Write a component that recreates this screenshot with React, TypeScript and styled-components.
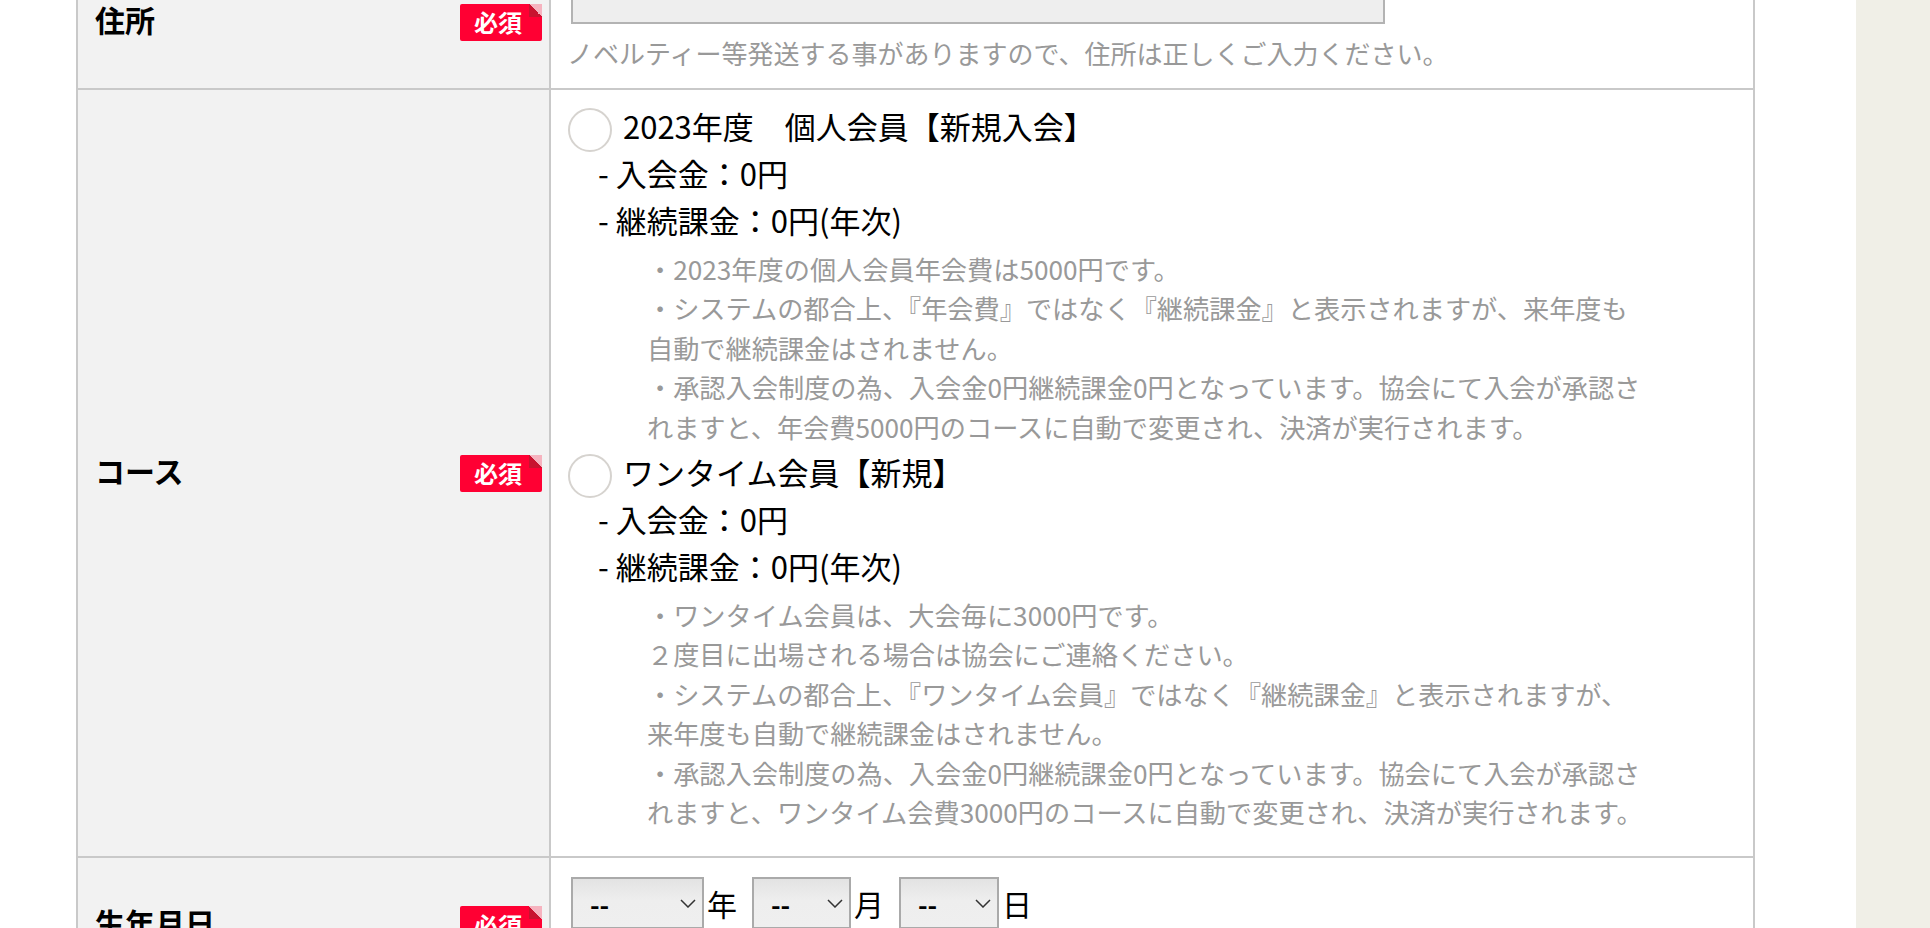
import React from 'react';
import styled, { createGlobalStyle } from 'styled-components';

const GlobalStyle = createGlobalStyle`
  html, body {
    margin: 0;
    padding: 0;
    background: #fff;
  }
  body {
    font-family: "Noto Sans CJK JP", "Noto Sans", sans-serif;
    color: #000;
    overflow: hidden;
  }
  * {
    box-sizing: border-box;
  }
`;

const Page = styled.div`
  display: flex;
  min-height: 928px;
`;

const Main = styled.main`
  flex: 1;
  background: #fff;
  padding: 0 101px 0 76px;
`;

const Side = styled.aside`
  width: 74px;
  flex: none;
  background: #f0efe7;
`;

const FormTable = styled.div`
  margin-top: -46px;
  border: 2px solid #c9c9c9;
  border-bottom: none;
`;

const Row = styled.div<{ $minHeight?: number }>`
  display: grid;
  grid-template-columns: 473px 1fr;
  border-bottom: 2px solid #c9c9c9;
  min-height: ${p => (p.$minHeight ? `${p.$minHeight}px` : 'auto')};
`;

const LabelCell = styled.div`
  display: flex;
  align-items: center;
  justify-content: space-between;
  padding: 0 7px 0 17px;
  background: #f2f2f2;
  border-right: 2px solid #c9c9c9;
`;

const LabelText = styled.span`
  margin-bottom: 6px;
  font-size: 30px;
  font-weight: 700;
  color: #000;
`;

const Badge = styled.span`
  position: relative;
  display: flex;
  align-items: center;
  justify-content: center;
  width: 82px;
  height: 37px;
  padding-right: 6px;
  background: #ff0033;
  border-radius: 2px;
  color: #fff;
  font-size: 24px;
  font-weight: 700;
  line-height: 1;

  &::after {
    content: '';
    position: absolute;
    top: 0;
    right: 0;
    width: 13px;
    height: 13px;
    background: linear-gradient(45deg, #c8132f 50%, #f6b3bf 50%);
  }
`;

const ContentCell = styled.div<{ $pt?: number; $pb?: number }>`
  padding: ${p => p.$pt ?? 16}px 16px ${p => p.$pb ?? 16}px;
  background: #fff;
`;

const TextInput = styled.input`
  display: block;
  width: 814px;
  height: 52px;
  margin-left: 4px;
  padding: 0 12px;
  border: 2px solid #b3b3b3;
  border-radius: 0;
  background: #eee;
  font-family: inherit;
  font-size: 30px;
`;

const InputNote = styled.p`
  margin: 9px 0 0;
  font-size: 26px;
  line-height: 39px;
  color: #999;
`;

const Course = styled.div`
  & + & {
    margin-top: 1px;
  }
`;

const CourseTitle = styled.label`
  display: flex;
  align-items: center;
  gap: 11px;
  font-size: 31px;
  line-height: 47px;
  color: #000;
`;

const Radio = styled.input.attrs({ type: 'radio' })`
  appearance: none;
  flex: none;
  width: 44px;
  height: 44px;
  margin: 4px 0 -4px 1px;
  border: 2px solid #d6d3cf;
  border-radius: 50%;
  background: #fff;
`;

const FeeLine = styled.div`
  padding-left: 31px;
  font-size: 31px;
  line-height: 47px;
  color: #000;
`;

const CourseNote = styled.p`
  margin: 7px 0 0;
  padding-left: 80px;
  font-size: 26.2px;
  line-height: 39.4px;
  color: #999;
  white-space: nowrap;
`;

const DateRow = styled.div`
  display: flex;
  align-items: center;
  margin-left: 4px;
`;

const SelectWrap = styled.span<{ $width: number }>`
  position: relative;
  display: inline-block;
  width: ${p => p.$width}px;
  height: 52px;
`;

const DateSelect = styled.select`
  appearance: none;
  width: 100%;
  height: 100%;
  padding: 0 0 0 17px;
  border: 2px solid #aaa;
  border-radius: 0;
  background: linear-gradient(#e3e3e3, #eeeeee 45%, #efefef);
  font-family: inherit;
  font-size: 26px;
  font-weight: 700;
  color: #000;
`;

const Chevron = styled.svg`
  position: absolute;
  right: 8px;
  top: 22px;
  pointer-events: none;
`;

const DateUnit = styled.span`
  margin: 0 15px 0 3px;
  font-size: 30px;
  line-height: 1;
  color: #000;
`;

type CourseData = {
  title: string;
  entryFee: string;
  recurring: string;
  notes: string[];
};

const courses: CourseData[] = [
  {
    title: '2023年度　個人会員【新規入会】',
    entryFee: '- 入会金：0円',
    recurring: '- 継続課金：0円(年次)',
    notes: [
      '・2023年度の個人会員年会費は5000円です。',
      '・システムの都合上、『年会費』ではなく『継続課金』と表示されますが、来年度も',
      '自動で継続課金はされません。',
      '・承認入会制度の為、入会金0円継続課金0円となっています。協会にて入会が承認さ',
      'れますと、年会費5000円のコースに自動で変更され、決済が実行されます。',
    ],
  },
  {
    title: 'ワンタイム会員【新規】',
    entryFee: '- 入会金：0円',
    recurring: '- 継続課金：0円(年次)',
    notes: [
      '・ワンタイム会員は、大会毎に3000円です。',
      '２度目に出場される場合は協会にご連絡ください。',
      '・システムの都合上、『ワンタイム会員』ではなく『継続課金』と表示されますが、',
      '来年度も自動で継続課金はされません。',
      '・承認入会制度の為、入会金0円継続課金0円となっています。協会にて入会が承認さ',
      'れますと、ワンタイム会費3000円のコースに自動で変更され、決済が実行されます。',
    ],
  },
];

const dateFields = [
  { unit: '年', width: 133 },
  { unit: '月', width: 99 },
  { unit: '日', width: 100 },
];

const Required: React.FC = () => <Badge>必須</Badge>;

export default function App() {
  return (
    <>
      <GlobalStyle />
      <Page>
        <Main>
          <FormTable>
            <Row>
              <LabelCell>
                <LabelText>住所</LabelText>
                <Required />
              </LabelCell>
              <ContentCell>
                <TextInput type="text" />
                <InputNote>ノベルティー等発送する事がありますので、住所は正しくご入力ください。</InputNote>
              </ContentCell>
            </Row>

            <Row>
              <LabelCell>
                <LabelText>コース</LabelText>
                <Required />
              </LabelCell>
              <ContentCell $pt={12} $pb={24}>
                {courses.map(course => (
                  <Course key={course.title}>
                    <CourseTitle>
                      <Radio name="course" />
                      {course.title}
                    </CourseTitle>
                    <FeeLine>{course.entryFee}</FeeLine>
                    <FeeLine>{course.recurring}</FeeLine>
                    <CourseNote>
                      {course.notes.map((line, i) => (
                        <React.Fragment key={i}>
                          {i > 0 && <br />}
                          {line}
                        </React.Fragment>
                      ))}
                    </CourseNote>
                  </Course>
                ))}
              </ContentCell>
            </Row>

            <Row $minHeight={135}>
              <LabelCell>
                <LabelText>生年月日</LabelText>
                <Required />
              </LabelCell>
              <ContentCell $pt={19}>
                <DateRow>
                  {dateFields.map(field => (
                    <React.Fragment key={field.unit}>
                      <SelectWrap $width={field.width}>
                        <DateSelect defaultValue="">
                          <option value="">--</option>
                        </DateSelect>
                        <Chevron width="16" height="9" viewBox="0 0 16 9">
                          <polyline points="1,1 8,8 15,1" fill="none" stroke="#333" strokeWidth="1.5" />
                        </Chevron>
                      </SelectWrap>
                      <DateUnit>{field.unit}</DateUnit>
                    </React.Fragment>
                  ))}
                </DateRow>
              </ContentCell>
            </Row>
          </FormTable>
        </Main>
        <Side />
      </Page>
    </>
  );
}
